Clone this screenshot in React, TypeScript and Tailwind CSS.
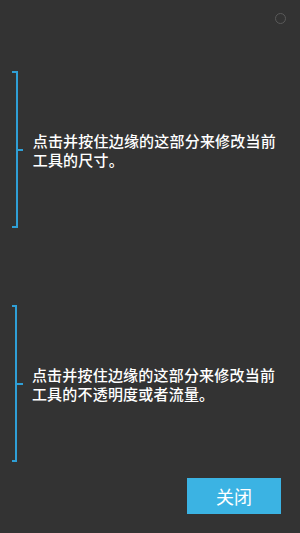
export default function App() {
  const font = { fontFamily: '"Noto Sans CJK SC", "Noto Sans", sans-serif' };

  const sections = [
    "点击并按住边缘的这部分来修改当前工具的尺寸。",
    "点击并按住边缘的这部分来修改当前工具的不透明度或者流量。",
  ];

  return (
    <main
      className="relative flex h-[533px] w-[300px] flex-col bg-[#333333] text-white"
      style={font}
    >
      {/* 右上角圆点 */}
      <span className="absolute right-[14px] top-[13px] h-[11px] w-[11px] rounded-full border border-[#5a5a5a]" />

      <div className="flex flex-col gap-[77px] pt-[71px]">
        {sections.map((text) => (
          <section key={text} className="flex h-[157px] items-center">
            <div className="relative ml-[12px] h-full w-[7px] border-y-2 border-r-2 border-[#2f9fd6]">
              <span className="absolute left-[5px] top-1/2 h-[2px] w-[6px] -translate-y-1/2 bg-[#2f9fd6]" />
            </div>
            <p className="ml-[15px] mr-[20px] text-[15px] font-medium leading-[19px] tracking-[0.2px]">
              {text}
            </p>
          </section>
        ))}
      </div>

      <div className="mt-auto flex justify-end pb-[19px] pr-[19px]">
        <button className="flex h-[36px] w-[94px] items-center justify-center bg-[#3bb3e3] text-[18px] text-white">
          关闭
        </button>
      </div>
    </main>
  );
}
